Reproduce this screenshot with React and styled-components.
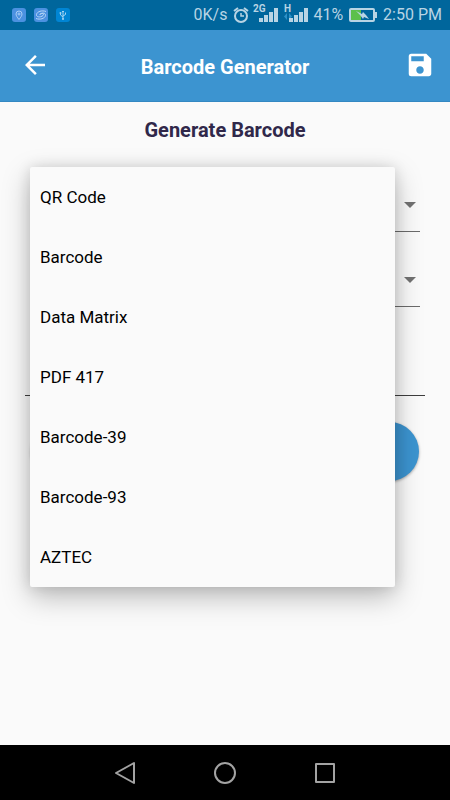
import React, { useState } from "react";
import styled, { createGlobalStyle } from "styled-components";
import { MdArrowBack, MdSave } from "react-icons/md";

const GlobalStyle = createGlobalStyle`
  *, *::before, *::after { box-sizing: border-box; }
  body { margin: 0; background: #fafafa; font-family: Roboto, "Liberation Sans", sans-serif; }
  button, input, select { font: inherit; border: 0; background: none; margin: 0; padding: 0; border-radius: 0; }
`;

const Screen = styled.div`
  min-height: 100vh;
  display: flex;
  flex-direction: column;
  background: #fafafa;
`;

const StatusBar = styled.div`
  height: 30px;
  padding: 0 8px 0 12px;
  display: flex;
  align-items: center;
  justify-content: space-between;
  background: #00669c;
  color: #b8d4e4;
  font-size: 16px;
  line-height: 20px;
  white-space: nowrap;
  svg { display: block; flex: none; }
`;

const StatusGroup = styled.div`
  display: flex;
  align-items: center;
  gap: ${(p) => p.$gap}px;
`;

const AppTile = styled.span`
  width: 14px;
  height: 14px;
  border-radius: 3px;
  background: ${(p) => p.$color};
`;

const Header = styled.header`
  height: 72px;
  padding: 0 15px 2px 20px;
  display: flex;
  align-items: center;
  justify-content: space-between;
  background: #3c94d0;
  border-bottom: 1px solid #3488c2;
  color: #fff;
`;

const HeaderTitle = styled.h1`
  margin: 0;
  padding: 5px 5px 0 0;
  flex: 1;
  text-align: center;
  font-size: 20px;
  line-height: 24px;
  font-weight: 700;
`;

const IconButton = styled.button`
  width: 30px;
  height: 30px;
  color: #fff;
  cursor: pointer;
  svg { display: block; }
`;

const Main = styled.main`
  flex: 1;
  padding: 16px 25px 0;
`;

const Heading = styled.h2`
  margin: 0 0 34px;
  text-align: center;
  color: #30284a;
  font-size: 20px;
  line-height: 24px;
  font-weight: 700;
`;

const Form = styled.form`
  display: flex;
  flex-direction: column;
`;

const Field = styled.div`
  position: relative;
  height: 56px;
  margin: 0 5px 19px;
`;

const Select = styled.select`
  appearance: none;
  width: 100%;
  height: 56px;
  padding: 0 30px 0 10px;
  border-bottom: 1px solid #6b6b6b;
  color: #000;
  font-size: 17px;
`;

const Caret = styled.svg`
  position: absolute;
  right: 4px;
  top: 26px;
  pointer-events: none;
`;

const TextInput = styled.input`
  width: 100%;
  height: 50px;
  margin: 20px 0 26px;
  padding: 0 4px;
  border-bottom: 1px solid #3e3e3e;
  font-size: 17px;
`;

const SubmitButton = styled.button`
  height: 59px;
  margin: 0 6px;
  border-radius: 30px;
  background: #3c94d0;
  box-shadow: 0 1px 3px rgba(0, 0, 0, 0.35);
  color: #fff;
  font-size: 17px;
`;

const Menu = styled.ul`
  position: absolute;
  z-index: 1;
  top: -9px;
  left: 0;
  right: 25px;
  margin: 0;
  padding: 0;
  list-style: none;
  border-radius: 2px;
  background: #fafafa;
  box-shadow: 0 10px 28px rgba(0, 0, 0, 0.26), 0 0 14px rgba(0, 0, 0, 0.12);
`;

const MenuItem = styled.button`
  display: block;
  width: 100%;
  height: 60px;
  padding: 0 10px;
  text-align: left;
  color: #000;
  font-size: 17px;
  line-height: 20px;
  cursor: pointer;
`;

const NavBar = styled.nav`
  height: 55px;
  padding: 0 75px;
  display: grid;
  grid-template-columns: repeat(3, 1fr);
  justify-items: center;
  align-items: center;
  background: #000;
`;

const NavButton = styled.button`
  height: 40px;
  width: 40px;
  display: grid;
  place-items: center;
  cursor: pointer;
`;

const Signal = ({ label, arrows }) => (
  <svg width="26" height="24" viewBox="0 0 26 24" fill="currentColor" aria-hidden="true">
    <text x={arrows ? 1 : 0} y="9" fontFamily="Roboto, sans-serif" fontSize="10" fontWeight="700">{label}</text>
    {arrows && <path d="M4 10v7L1 13.500zM6 10v7l3-3.500z" fill="#2c91c8" />}
    <path d="M6 15h4v4H6zM11 12h4v7h-4zM16 9h4v10h-4zM21 5h4v14h-4z" />
  </svg>
);

const formats = ["QR Code", "Barcode", "Data Matrix", "PDF 417", "Barcode-39", "Barcode-93", "AZTEC"];

const DownCaret = () => (
  <Caret width="12" height="6" viewBox="0 0 12 6" aria-hidden="true">
    <path d="M0 0h12L6 6z" fill="#727272" />
  </Caret>
);

export default function App() {
  const [format, setFormat] = useState(formats[0]);
  const [open, setOpen] = useState(true);

  const choose = (value) => {
    setFormat(value);
    setOpen(false);
  };

  return (
    <>
      <GlobalStyle />
      <Screen>
        <StatusBar>
          <StatusGroup $gap={8}>
            <AppTile $color="#4b91e0">
              <svg width="14" height="14" viewBox="0 0 14 14" fill="none" stroke="#a9cdf5" aria-hidden="true">
                <path d="M7 11.500C5 9 4 7.500 4 6a3 3 0 0 1 6 0c0 1.500-1 3-3 5.500z" />
                <circle cx="7" cy="6" r="1" />
              </svg>
            </AppTile>
            <AppTile $color="#4b91e0">
              <svg width="14" height="14" viewBox="0 0 14 14" fill="none" stroke="#b8d6f6" aria-hidden="true">
                <path d="M12 3.500C8 2 3 3.500 2.500 6.500S7 9.500 9 7.500 8 4.500 6 6.500M2 10.500c4 1.500 9 0 9.500-3S7.500 4.500 5.500 6.500" />
              </svg>
            </AppTile>
            <AppTile $color="#0085d4">
              <svg width="14" height="14" viewBox="0 0 14 14" fill="none" stroke="#a6d4f2" aria-hidden="true">
                <path d="M7 3v8M4.500 5v2L7 9M9.500 4.500v2L7 8M6 4l1-1 1 1" />
                <circle cx="7" cy="11" r="1" fill="#a6d4f2" stroke="none" />
                <circle cx="4.500" cy="5" r="1" fill="#a6d4f2" stroke="none" />
              </svg>
            </AppTile>
          </StatusGroup>
          <StatusGroup $gap={6}>
            <span>0K/s</span>
            <StatusGroup $gap={4}>
              <svg width="16" height="18" viewBox="0 0 16 18" fill="none" stroke="currentColor" strokeWidth="2" aria-hidden="true">
                <circle cx="8" cy="10" r="6" />
                <path d="M1 5l4-3M15 5l-4-3" />
                <path d="M8 7v3h3" strokeWidth="1.500" />
              </svg>
              <Signal label="2G" />
              <Signal label="H" arrows />
              <span>41%</span>
            </StatusGroup>
            <svg width="28" height="14" viewBox="0 0 28 14" aria-hidden="true">
              <path d="M2 2h10v10H2z" fill="#5cc04c" />
              <rect x="1" y="1" width="24" height="12" rx="1" fill="none" stroke="currentColor" strokeWidth="2" />
              <path d="M26 4h2v6h-2z" fill="currentColor" />
              <path d="M7 3l6 3 1-2 3 3 3 4-5-2-1 2-3-4z" fill="currentColor" />
            </svg>
            <span>2:50 PM</span>
          </StatusGroup>
        </StatusBar>
        <Header>
          <IconButton type="button" aria-label="Back"><MdArrowBack size={30} /></IconButton>
          <HeaderTitle>Barcode Generator</HeaderTitle>
          <IconButton type="button" aria-label="Save"><MdSave size={30} /></IconButton>
        </Header>
        <Main>
          <Heading>Generate Barcode</Heading>
          <Form onSubmit={(e) => e.preventDefault()}>
            <Field>
              <Select
                aria-label="Barcode format"
                value={format}
                onChange={(e) => choose(e.target.value)}
                onMouseDown={(e) => { e.preventDefault(); setOpen(true); }}
              >
                {formats.map((name) => <option key={name}>{name}</option>)}
              </Select>
              <DownCaret />
              {open && (
                <Menu aria-label="Barcode formats">
                  {formats.map((name) => (
                    <li key={name}>
                      <MenuItem type="button" onClick={() => choose(name)}>{name}</MenuItem>
                    </li>
                  ))}
                </Menu>
              )}
            </Field>
            <Field>
              <Select aria-label="Content type" />
              <DownCaret />
            </Field>
            <TextInput type="text" aria-label="Content" />
            <SubmitButton type="submit" aria-label="Generate" />
          </Form>
        </Main>
        <NavBar aria-label="System navigation">
          <NavButton type="button" aria-label="Back">
            <svg width="22" height="24" viewBox="0 0 22 24" fill="none" stroke="#a3a3a3" strokeWidth="2" strokeLinejoin="round" aria-hidden="true">
              <path d="M20 2v20L2 12z" />
            </svg>
          </NavButton>
          <NavButton type="button" aria-label="Home">
            <svg width="22" height="22" viewBox="0 0 22 22" fill="none" stroke="#a3a3a3" strokeWidth="2" aria-hidden="true">
              <circle cx="11" cy="11" r="10" />
            </svg>
          </NavButton>
          <NavButton type="button" aria-label="Recent apps">
            <svg width="20" height="20" viewBox="0 0 20 20" fill="none" stroke="#a3a3a3" strokeWidth="2" strokeLinejoin="round" aria-hidden="true">
              <path d="M1 1h18v18H1z" />
            </svg>
          </NavButton>
        </NavBar>
      </Screen>
    </>
  );
}
